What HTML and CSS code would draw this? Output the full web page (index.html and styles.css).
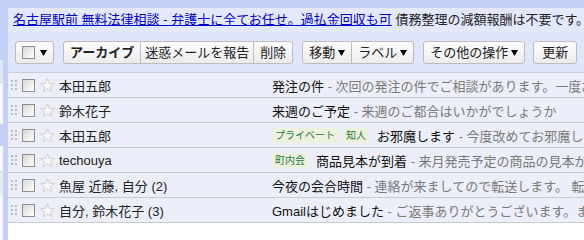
FILE: index.html
```html
<!DOCTYPE html>
<html lang="ja">
<head>
<meta charset="utf-8">
<link rel="stylesheet" href="styles.css">
</head>
<body>
<div class="topband"></div>
<div class="layout">
  <div class="rail">
    <div class="seg seg-a"></div>
    <div class="seg seg-b"></div>
    <div class="seg seg-c"></div>
    <div class="seg seg-d"></div>
    <div class="seg seg-e"></div>
    <div class="seg seg-f"></div>
    <div class="seg seg-g"></div>
  </div>
  <div class="main">
    <div class="ad"><a href="#">名古屋駅前 無料法律相談 - 弁護士に全てお任せ。過払金回収も可</a> 債務整理の減額報酬は不要です。</div>
    <div class="toolbar">
      <div class="btn sel"><span class="cb small"></span><svg class="arrow" width="7" height="6" viewBox="0 0 7 6"><polygon points="0,0 7,0 3.5,6" fill="#000"/></svg></div>
      <div class="group">
        <div class="btn b-first bold">アーカイブ</div>
        <div class="btn b-mid">迷惑メールを報告</div>
        <div class="btn b-last">削除</div>
      </div>
      <div class="group">
        <div class="btn b-first">移動<svg class="arrow" width="7" height="6" viewBox="0 0 7 6"><polygon points="0,0 7,0 3.5,6" fill="#000"/></svg></div>
        <div class="btn b-last">ラベル<svg class="arrow" width="7" height="6" viewBox="0 0 7 6"><polygon points="0,0 7,0 3.5,6" fill="#000"/></svg></div>
      </div>
      <div class="btn">その他の操作<svg class="arrow" width="7" height="6" viewBox="0 0 7 6"><polygon points="0,0 7,0 3.5,6" fill="#000"/></svg></div>
      <div class="btn refresh">更新</div>
    </div>
    <div class="list">
      <div class="row">
        <span class="handle"></span><span class="cb"></span>
        <svg class="star" width="15" height="15" viewBox="0 0 15 15"><polygon points="7.5,0.8 9.4,5.4 14.3,5.6 10.5,8.8 11.8,13.7 7.5,11 3.2,13.7 4.5,8.8 0.7,5.6 5.6,5.4" fill="#f6f6f8" stroke="#cfcfcf" stroke-width="1"/></svg>
        <span class="sender">本田五郎</span>
        <span class="text"><span class="subj">発注の件</span><span class="snip"> - 次回の発注の件でご相談があります。一度お時間をいただけますか</span></span>
      </div>
      <div class="row">
        <span class="handle"></span><span class="cb"></span>
        <svg class="star" width="15" height="15" viewBox="0 0 15 15"><polygon points="7.5,0.8 9.4,5.4 14.3,5.6 10.5,8.8 11.8,13.7 7.5,11 3.2,13.7 4.5,8.8 0.7,5.6 5.6,5.4" fill="#f6f6f8" stroke="#cfcfcf" stroke-width="1"/></svg>
        <span class="sender">鈴木花子</span>
        <span class="text"><span class="subj">来週のご予定</span><span class="snip"> - 来週のご都合はいかがでしょうか</span></span>
      </div>
      <div class="row">
        <span class="handle"></span><span class="cb"></span>
        <svg class="star" width="15" height="15" viewBox="0 0 15 15"><polygon points="7.5,0.8 9.4,5.4 14.3,5.6 10.5,8.8 11.8,13.7 7.5,11 3.2,13.7 4.5,8.8 0.7,5.6 5.6,5.4" fill="#f6f6f8" stroke="#cfcfcf" stroke-width="1"/></svg>
        <span class="sender">本田五郎</span>
        <span class="text"><span class="labels"><span class="pill">プライベート</span><span class="pill">知人</span></span><span class="subj">お邪魔します</span><span class="snip"> - 今度改めてお邪魔します</span></span>
      </div>
      <div class="row">
        <span class="handle"></span><span class="cb"></span>
        <svg class="star" width="15" height="15" viewBox="0 0 15 15"><polygon points="7.5,0.8 9.4,5.4 14.3,5.6 10.5,8.8 11.8,13.7 7.5,11 3.2,13.7 4.5,8.8 0.7,5.6 5.6,5.4" fill="#f6f6f8" stroke="#cfcfcf" stroke-width="1"/></svg>
        <span class="sender">techouya</span>
        <span class="text"><span class="labels"><span class="pill">町内会</span></span><span class="subj">商品見本が到着</span><span class="snip"> - 来月発売予定の商品の見本が届きました</span></span>
      </div>
      <div class="row">
        <span class="handle"></span><span class="cb"></span>
        <svg class="star" width="15" height="15" viewBox="0 0 15 15"><polygon points="7.5,0.8 9.4,5.4 14.3,5.6 10.5,8.8 11.8,13.7 7.5,11 3.2,13.7 4.5,8.8 0.7,5.6 5.6,5.4" fill="#f6f6f8" stroke="#cfcfcf" stroke-width="1"/></svg>
        <span class="sender">魚屋 近藤, 自分 (2)</span>
        <span class="text"><span class="subj">今夜の会合時間</span><span class="snip"> - 連絡が来ましてので転送します。 転送</span></span>
      </div>
      <div class="row">
        <span class="handle"></span><span class="cb"></span>
        <svg class="star" width="15" height="15" viewBox="0 0 15 15"><polygon points="7.5,0.8 9.4,5.4 14.3,5.6 10.5,8.8 11.8,13.7 7.5,11 3.2,13.7 4.5,8.8 0.7,5.6 5.6,5.4" fill="#f6f6f8" stroke="#cfcfcf" stroke-width="1"/></svg>
        <span class="sender">自分, 鈴木花子 (3)</span>
        <span class="text"><span class="subj">Gmailはじめました</span><span class="snip"> - ご返事ありがとうございます。またよろしく</span></span>
      </div>
    </div>
  </div>
</div>
</body>
</html>
```

FILE: styles.css
```css
html, body {
  margin: 0;
  padding: 0;
  background: #ffffff;
}
body {
  width: 584px;
  height: 240px;
  overflow: hidden;
  font-family: "Liberation Sans", "Noto Sans CJK JP", sans-serif;
  font-size: 13px;
  color: #222;
}
.topband {
  height: 8px;
  background: #c3cff5;
}
.layout {
  display: flex;
  height: 232px;
}
.rail {
  width: 8px;
  flex: none;
  display: flex;
  flex-direction: column;
}
.seg {
  border-right: 5px solid #c3cff5;
  background: #f7f7f7;
}
.seg-a { height: 52px; background: #c3cff5; }
.seg-b { height: 22px; background: #e2e7f7; }
.seg-c { height: 41px; border-top: 1px solid #dcdcdc; }
.seg-d { height: 22px; background: #c3cff5; }
.seg-e { height: 25px; }
.seg-f { height: 23px; background: #e6eaf7; border-top: 1px solid #dcdcdc; }
.seg-g { flex: 1; }

.main {
  flex: 1;
  min-width: 0;
  display: flex;
  flex-direction: column;
}
.ad {
  height: 24px;
  line-height: 24px;
  padding-left: 5px;
  background: #e3e9fb;
  white-space: nowrap;
  overflow: hidden;
  color: #222;
}
.ad a {
  color: #0000cc;
  text-decoration: underline;
}
.toolbar {
  height: 40px;
  box-sizing: border-box;
  padding: 9px 0 0 7px;
  background: #dfe6fa;
  display: flex;
  align-items: flex-start;
  gap: 9px;
}
.group {
  display: flex;
}
.btn {
  height: 23px;
  box-sizing: border-box;
  border: 1px solid #bdbdbd;
  border-radius: 3px;
  background: linear-gradient(#fdfdfd, #ececec);
  display: flex;
  align-items: center;
  padding: 0 6px;
  line-height: 21px;
  color: #222;
  white-space: nowrap;
}
.bold { font-weight: bold; }
.b-first { border-top-right-radius: 0; border-bottom-right-radius: 0; }
.b-mid { border-radius: 0; border-left: none; padding: 0 4px; }
.b-last { border-top-left-radius: 0; border-bottom-left-radius: 0; border-left: none; }
.arrow { margin-left: 3px; }
.sel { padding: 0 6px 0 6px; }
.sel .arrow { margin-left: 5px; }
.refresh { margin-left: -1px; padding: 0 8px; }

.cb {
  width: 13px;
  height: 13px;
  box-sizing: border-box;
  border: 1px solid #8e8e8e;
  background: linear-gradient(135deg, #d8d8d8, #f4f4f4 70%, #ffffff);
  flex: none;
}

.list {
  border-top: 1px solid #c9cedc;
  overflow: hidden;
}
.row {
  height: 24px;
  border-bottom: 1px solid #cacaca;
  background: #eceff9;
  display: flex;
  align-items: center;
  white-space: nowrap;
}
.handle {
  width: 6px;
  height: 11px;
  margin-left: 3px;
  flex: none;
  background-image: radial-gradient(circle, #bdbdbd 1px, transparent 1.2px);
  background-size: 4px 4px;
  background-position: -1px -1px;
}
.row .cb { margin-left: 5px; }
.star { margin-left: 5px; flex: none; }
.sender {
  width: 213px;
  flex: none;
  margin-left: 4px;
  color: #222;
}
.text {
  display: flex;
  align-items: center;
  overflow: hidden;
}
.labels {
  display: flex;
  gap: 5px;
  margin-right: 8px;
}
.pill {
  font-size: 10px;
  height: 15px;
  line-height: 15px;
  padding: 0 3px;
  border-radius: 2px;
  background: #edf2de;
  color: #1f7a3d;
}
.subj { color: #111; }
.snip { color: #7a7a7a; white-space: pre; }
```
